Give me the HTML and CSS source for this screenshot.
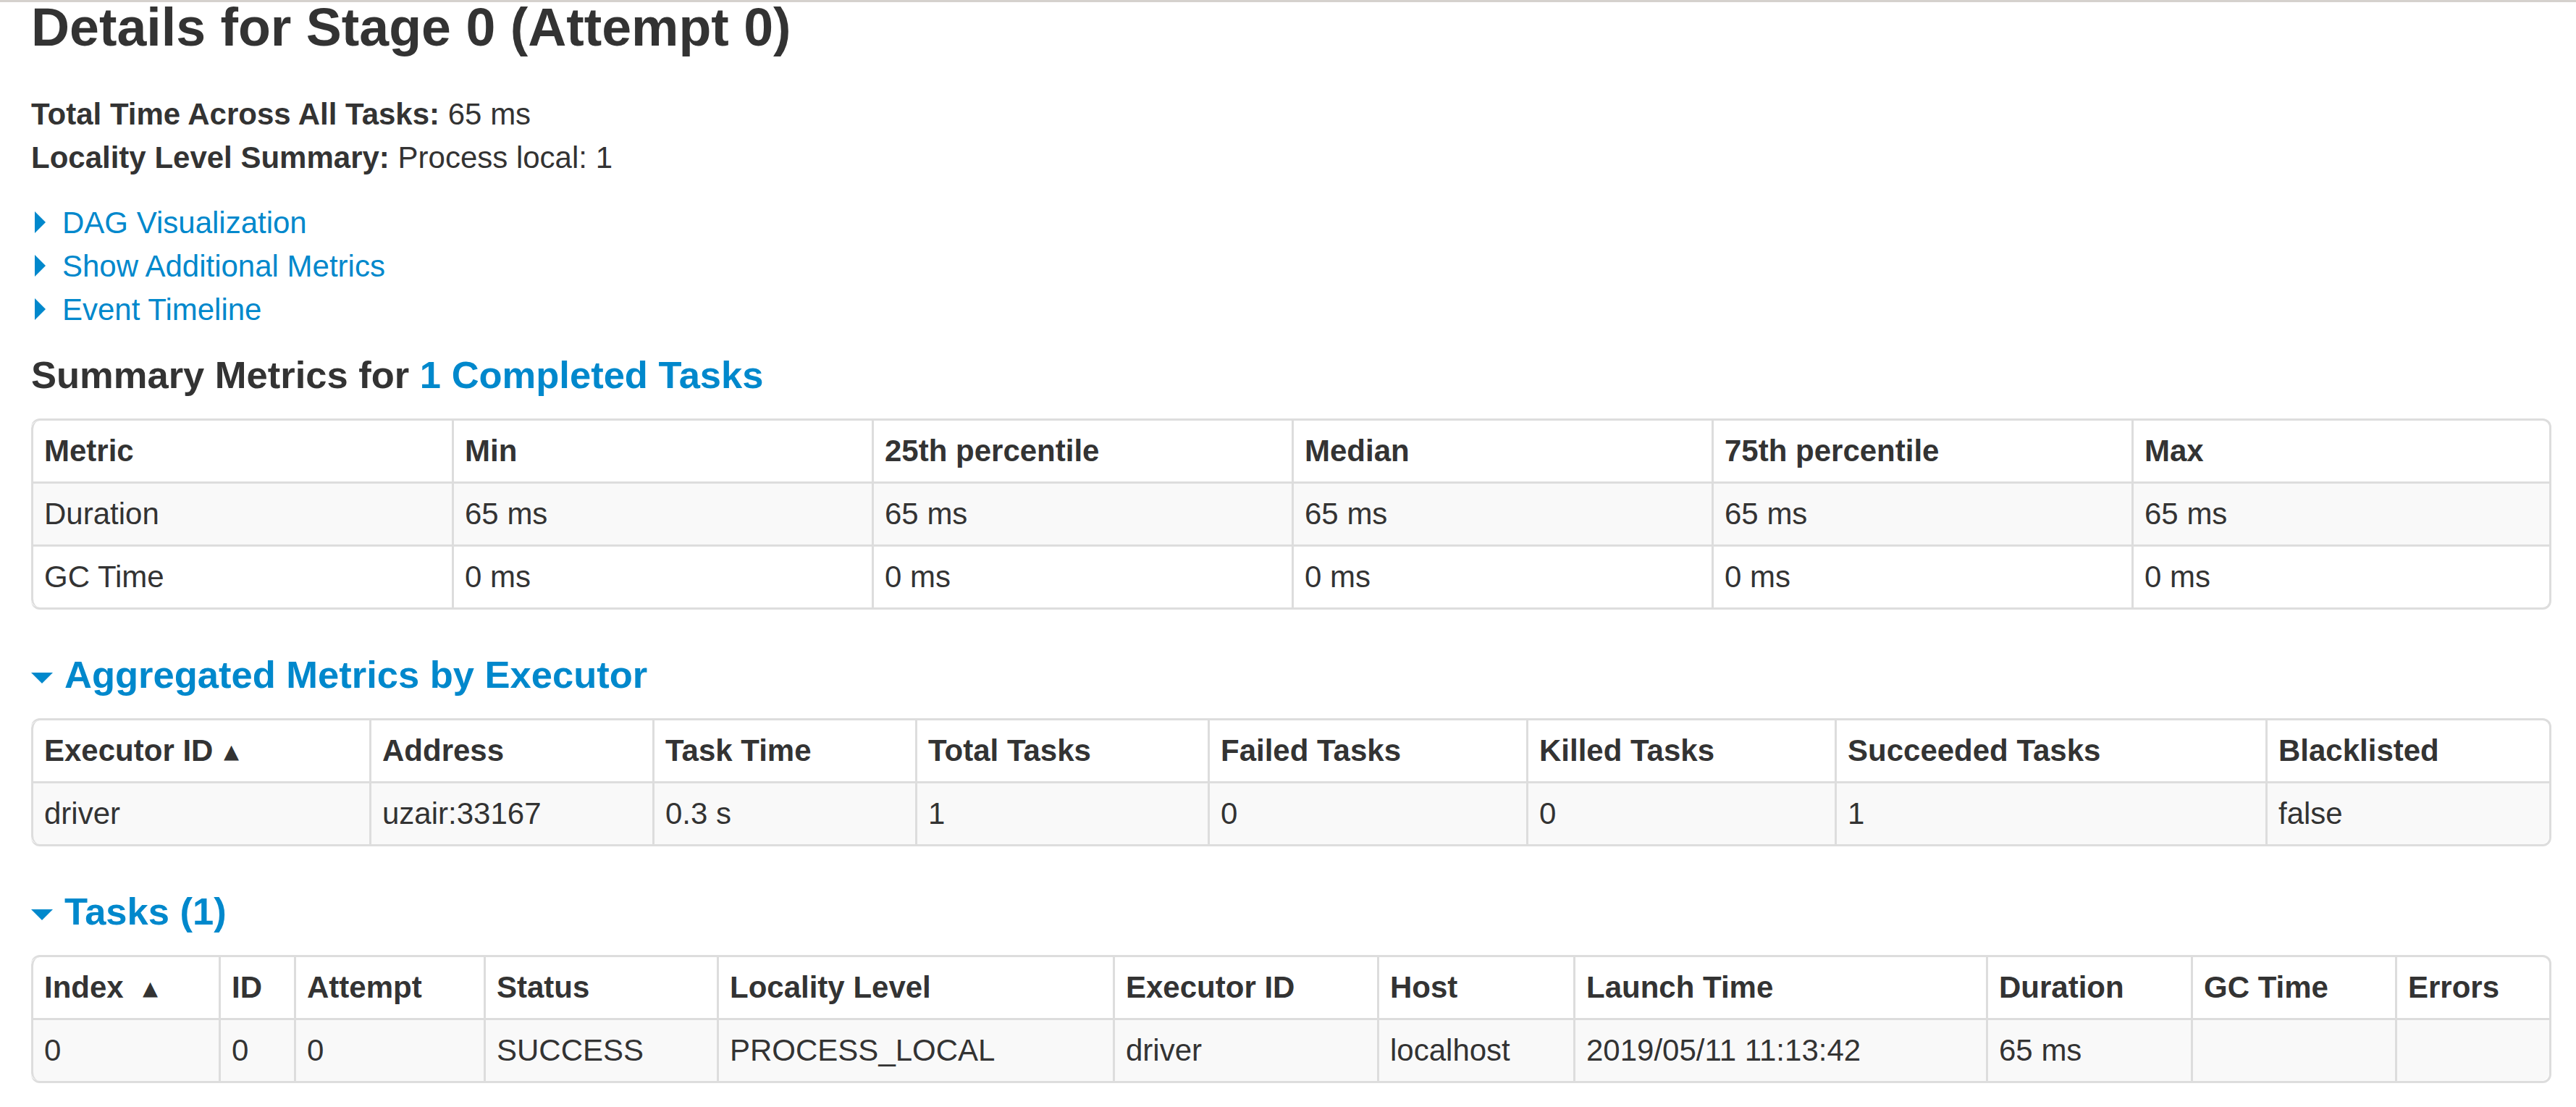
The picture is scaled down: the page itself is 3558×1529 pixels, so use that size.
FILE: index.html
```html
<!DOCTYPE html>
<html>
<head>
<meta charset="utf-8">
<title>Details for Stage 0</title>
<link rel="stylesheet" href="styles.css">
</head>
<body>
<div class="topline"></div>
<div class="container">
  <h3 class="title">Details for Stage 0 (Attempt 0)</h3>
  <ul class="summary">
    <li><strong>Total Time Across All Tasks: </strong>65 ms</li>
    <li><strong>Locality Level Summary: </strong>Process local: 1</li>
  </ul>
  <div class="expanders">
    <div class="expander"><span class="arrow-closed"></span><a href="#">DAG Visualization</a></div>
    <div class="expander"><span class="arrow-closed"></span><a href="#">Show Additional Metrics</a></div>
    <div class="expander"><span class="arrow-closed"></span><a href="#">Event Timeline</a></div>
  </div>

  <h4 class="section-title">Summary Metrics for <a href="#">1 Completed Tasks</a></h4>
  <table class="table summary-table">
    <thead>
      <tr>
        <th class="s1">Metric</th><th class="s2">Min</th><th class="s3">25th percentile</th><th class="s4">Median</th><th class="s5">75th percentile</th><th class="s6">Max</th>
      </tr>
    </thead>
    <tbody>
      <tr><td>Duration</td><td>65 ms</td><td>65 ms</td><td>65 ms</td><td>65 ms</td><td>65 ms</td></tr>
      <tr><td>GC Time</td><td>0 ms</td><td>0 ms</td><td>0 ms</td><td>0 ms</td><td>0 ms</td></tr>
    </tbody>
  </table>

  <h4 class="section-title collapse"><span class="arrow-open"></span><a href="#">Aggregated Metrics by Executor</a></h4>
  <table class="table executor-table">
    <thead>
      <tr>
        <th class="e1">Executor ID<span class="sort">&nbsp;&#x25B4;</span></th>
        <th class="e2">Address</th>
        <th class="e3">Task Time</th>
        <th class="e4">Total Tasks</th>
        <th class="e5">Failed Tasks</th>
        <th class="e6">Killed Tasks</th>
        <th class="e7">Succeeded Tasks</th>
        <th class="e8">Blacklisted</th>
      </tr>
    </thead>
    <tbody>
      <tr><td>driver</td><td>uzair:33167</td><td>0.3 s</td><td>1</td><td>0</td><td>0</td><td>1</td><td>false</td></tr>
    </tbody>
  </table>

  <h4 class="section-title collapse"><span class="arrow-open"></span><a href="#">Tasks (1)</a></h4>
  <table class="table tasks-table">
    <thead>
      <tr>
        <th class="t1">Index <span class="sort">&nbsp;&#x25B4;</span></th>
        <th class="t2">ID</th>
        <th class="t3">Attempt</th>
        <th class="t4">Status</th>
        <th class="t5">Locality Level</th>
        <th class="t6">Executor ID</th>
        <th class="t7">Host</th>
        <th class="t8">Launch Time</th>
        <th class="t9">Duration</th>
        <th class="t10">GC Time</th>
        <th class="t11">Errors</th>
      </tr>
    </thead>
    <tbody>
      <tr><td>0</td><td>0</td><td>0</td><td>SUCCESS</td><td>PROCESS_LOCAL</td><td>driver</td><td>localhost</td><td>2019/05/11 11:13:42</td><td>65 ms</td><td></td><td></td></tr>
    </tbody>
  </table>
</div>
</body>
</html>
```

FILE: styles.css
```css
html, body {
  margin: 0;
  padding: 0;
  background: #ffffff;
}

body {
  font-family: "Liberation Sans", Arial, "DejaVu Sans", sans-serif;
  font-size: 42px;
  line-height: 60px;
  color: #333333;
}

a {
  color: #0088cc;
  text-decoration: none;
}

.topline {
  height: 3px;
  background: #d5d1cd;
}

.container {
  padding: 0 34px 0 43px;
}

.title {
  margin: 0;
  font-size: 73.5px;
  line-height: 70px;
  font-weight: bold;
  color: #333333;
}

.summary {
  list-style: none;
  margin: 55px 0 30px 0;
  padding: 0;
}

.summary strong {
  font-weight: bold;
}

.expanders {
  margin: 0;
}

.expander {
  height: 60px;
}

.arrow-closed {
  display: inline-block;
  width: 0;
  height: 0;
  border-top: 15px solid transparent;
  border-bottom: 15px solid transparent;
  border-left: 15px solid #0088cc;
  margin-left: 5px;
  margin-right: 23px;
}

.arrow-open {
  display: inline-block;
  width: 0;
  height: 0;
  border-left: 15px solid transparent;
  border-right: 15px solid transparent;
  border-top: 15px solid #0088cc;
  margin-bottom: 6px;
  margin-right: 16px;
}

.section-title {
  margin: 30px 0 30px 0;
  font-size: 52.5px;
  line-height: 60px;
  font-weight: bold;
  color: #333333;
}

.section-title.collapse {
  margin-top: 60px;
}

.table {
  width: 100%;
  table-layout: fixed;
  border-collapse: separate;
  border-spacing: 0;
  border: 3px solid #dddddd;
  border-left: 0;
  border-radius: 12px;
  margin: 0;
}

.table th,
.table td {
  box-sizing: border-box;
  padding: 12px 15px;
  line-height: 60px;
  text-align: left;
  vertical-align: top;
  border-left: 3px solid #dddddd;
  white-space: nowrap;
  overflow: hidden;
}

.table th {
  font-weight: bold;
}

.table tbody td {
  border-top: 3px solid #dddddd;
}

.table tbody tr:nth-child(odd) td {
  background: #f9f9f9;
}

.table thead tr:first-child th:first-child {
  border-top-left-radius: 12px;
}

.table thead tr:first-child th:last-child {
  border-top-right-radius: 12px;
}

.table tbody tr:last-child td:first-child {
  border-bottom-left-radius: 12px;
}

.table tbody tr:last-child td:last-child {
  border-bottom-right-radius: 12px;
}

.sort {
  font-family: "DejaVu Sans", sans-serif;
}

/* summary metrics columns */
.s1 { width: 581px; }
.s2, .s3, .s4, .s5 { width: 580px; }
.s6 { width: 577px; }

/* executor columns */
.e1 { width: 467px; }
.e2 { width: 391px; }
.e3 { width: 363px; }
.e4 { width: 404px; }
.e5 { width: 440px; }
.e6 { width: 426px; }
.e7 { width: 595px; }
.e8 { width: 392px; }

/* tasks columns */
.t1 { width: 259px; }
.t2 { width: 104px; }
.t3 { width: 262px; }
.t4 { width: 322px; }
.t5 { width: 547px; }
.t6 { width: 365px; }
.t7 { width: 271px; }
.t8 { width: 570px; }
.t9 { width: 283px; }
.t10 { width: 282px; }
.t11 { width: 213px; }
```
